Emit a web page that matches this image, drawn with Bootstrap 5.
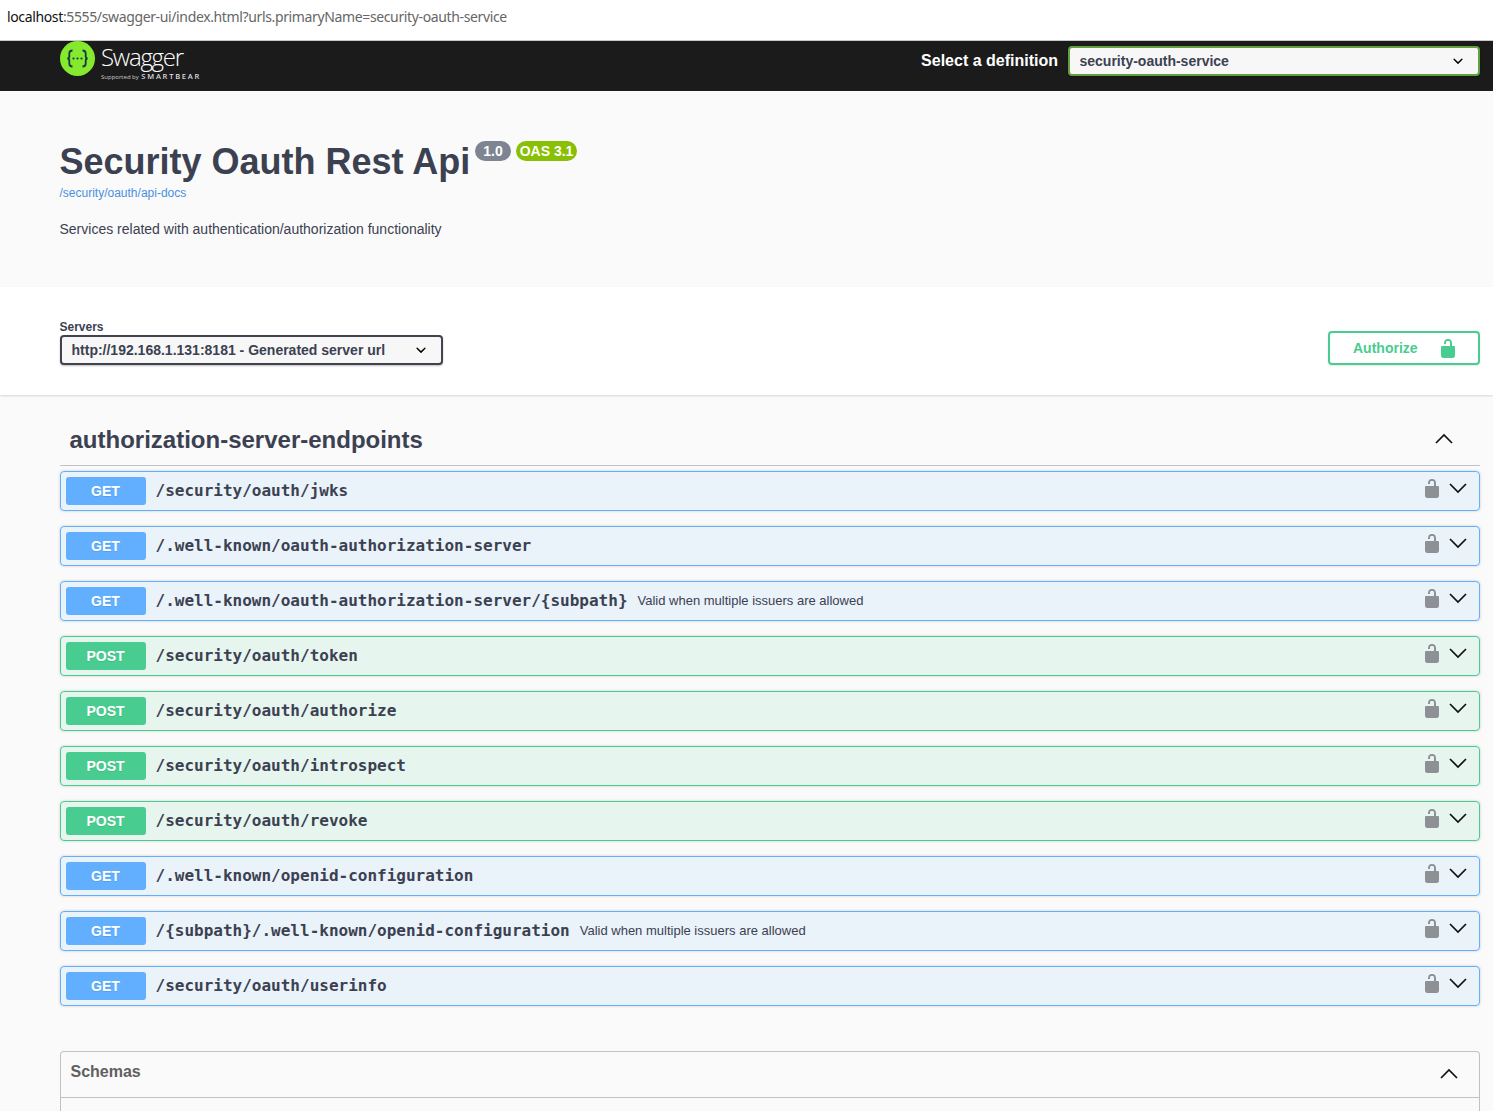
<!DOCTYPE html>
<html lang="en">
<head>
<meta charset="utf-8"/>
<meta content="width=device-width, initial-scale=1.0" name="viewport"/>
<title>Swagger UI</title>
<link href="https://cdn.jsdelivr.net/npm/bootstrap@5.3.2/dist/css/bootstrap.min.css" rel="stylesheet"/>
<style>
  html, body { overflow: hidden; }
  body { background: #fafafa; font-family: "Liberation Sans", Arial, sans-serif; color: #3b4151; }

  .url-bar { height: 41px; background: #fff; border-bottom: 1px solid #c8c8c8; padding: 7px 0 0 7px; font: 14px/20px "Noto Sans", sans-serif; color: #666; letter-spacing: -0.365px; }
  .url-host { color: #111; }

  .top-strip { height: 50px; background: #1b1b1b; padding: 0 13px 0 60px; }
  .logo-text { color: #fff; line-height: 1; margin-left: 6px; }
  .logo-name { font: 300 24px/24px "Open Sans", sans-serif; letter-spacing: -1.25px; margin-top: 4px; }
  .logo-sub { font: 6px/8px "Open Sans", sans-serif; color: #ccc; margin-top: 3px; white-space: nowrap; }
  .logo-sub b { font-size: 7.5px; letter-spacing: 1.75px; font-weight: 600; color: #ddd; margin-left: 1px; }
  .def-area { padding-top: 5px; }
  .def-label { color: #fff; font-size: 16px; font-weight: 700; margin-left: -.5px; }
  .def-select.form-select, .server-select.form-select {
    height: 30px; padding: 0 10px 0 9.5px; border-radius: 4px; background-color: #f7f7f7;
    background-image: url("data:image/svg+xml,%3Csvg xmlns='http://www.w3.org/2000/svg' viewBox='0 0 20 20'%3E%3Cpath d='M13.418 7.859a.695.695 0 0 1 .978 0 .68.68 0 0 1 0 .969l-3.908 3.83a.697.697 0 0 1-.979 0l-3.908-3.83a.68.68 0 0 1 0-.969.695.695 0 0 1 .978 0L10 11l3.418-3.141z'/%3E%3C/svg%3E");
    background-position: right 10px center; background-size: 20px; font-size: 14px; font-weight: 700; color: #3b4151; box-shadow: 0 1px 2px rgba(0,0,0,.25);
  }
  .def-select.form-select { width: 412px; margin-left: 10px; border: 2px solid #62a03f; }
  .server-select.form-select { width: 383px; border: 2px solid #41444e; }

  .info-block { height: 196px; padding: 48px 60px 0 59.5px; background: #fafafa; }
  .api-title { font-size: 36px; line-height: 45px; font-weight: 700; margin: 0; color: #3b4151; }
  .ver-pill { display: inline-block; height: 20px; margin-top: 2px; padding: 0 4px; border-radius: 10px; font-size: 14px; line-height: 20px; font-weight: 700; color: #fff; background: #7d8492; }
  .ver-pill.one { margin-left: 5px; padding: 0 8px; }
  .ver-pill.oas { margin-left: 5px; background: #89bf04; }
  .docs-link { display: block; font-size: 12px; line-height: 16px; margin-top: 1px; color: #4990e2; text-decoration: none; }
  .api-desc { font-size: 14px; line-height: 20px; margin: 18px 0 0; color: #3b4151; }

  .scheme-block { height: 108px; background: #fff; padding: 33px 13px 0 60px; box-shadow: 0 1px 2px rgba(0,0,0,.15); }
  .servers-label { font-size: 12px; line-height: 14px; font-weight: 700; margin-bottom: 1px; margin-left: -.5px; }
  .auth-btn { width: 152px; height: 34px; margin-top: 11px; border: 2px solid #49cc90; border-radius: 4px; background: transparent; color: #49cc90; font-size: 14px; font-weight: 700; padding: 0 20px 0 23px; box-shadow: 0 1px 2px rgba(0,0,0,.1); }

  .ops-wrap { padding: 0 13px 0 60px; }
  .tag-head { height: 71px; border-bottom: 1px solid rgba(59,65,81,.3); padding: 19px 27px 0 9.5px; margin-bottom: 5px; }
  .tag-name { font-size: 24px; font-weight: 700; margin: 0; line-height: 1; padding-top: 1px; }
  .tag-arrow { margin-top: -2px; }

  .op-row { height: 40px; margin-bottom: 15px; padding: 5px 12px 5px 5px; border-radius: 4px; border: 1px solid; box-shadow: 0 0 3px rgba(0,0,0,.19); }
  .op-get { background: rgba(97,175,254,.1); border-color: #61affe; }
  .op-post { background: rgba(73,204,144,.1); border-color: #49cc90; }
  .op-verb { width: 80px; height: 28px; padding-right: 1px; border-radius: 3px; color: #fff; font-size: 14px; font-weight: 700; line-height: 28px; text-align: center; text-shadow: 0 1px 0 rgba(0,0,0,.1); }
  .op-get .op-verb { background: #61affe; }
  .op-post .op-verb { background: #49cc90; }
  .op-path { font: 700 16px/28px "DejaVu Sans Mono", monospace; margin-left: 9.5px; color: #3b4151; }
  .op-note { font-size: 13px; line-height: 28px; margin-left: 10px; color: #3b4151; }
  .op-lock { margin-right: 7px; margin-top: -7px; }
  .op-arrow { margin-top: -6px; }

  .schema-box { margin-top: 45px; height: 60px; border: 1px solid rgba(59,65,81,.3); border-bottom: 0; border-radius: 4px 4px 0 0; }
  .schema-head { height: 46px; border-bottom: 1px solid rgba(59,65,81,.3); padding: 0 21px 0 9.5px; }
  .schema-title { font-size: 16px; font-weight: 700; color: #606060; margin-top: -6px; }
  .schema-arrow { margin-top: -2px; }
</style>
</head>
<body>
<svg class="d-none" xmlns="http://www.w3.org/2000/svg">
  <symbol id="ico-lock" viewBox="0 0 20 20"><path d="M15.8 8H14V5.6C14 2.70 13 1 10 1S6 2.70 6 5.6V6h2v-.8C8 3.20 8.5 3 10 3s2 .2 2 2.2V8H4.2C3.5 8 3 8.5 3 9.2v8.6c0 1.2 1 2.200 2.200 2.200h9.600c1.200 0 2.200-1 2.200-2.200V9.200C17 8.500 16.500 8 15.800 8z"/></symbol>
  <symbol id="ico-down" viewBox="0 0 18 11"><path d="M1 1l8 8 8-8" fill="none" stroke="#111" stroke-width="1.700"/></symbol>
  <symbol id="ico-up" viewBox="0 0 18 11"><path d="M1 10l8-8 8 8" fill="none" stroke="#111" stroke-width="1.700"/></symbol>
</svg>

<div class="url-bar"><span class="url-host">localhost</span>:5555/swagger-ui/index.html?urls.primaryName=security-oauth-service</div>

<div class="top-strip d-flex align-items-start justify-content-between">
  <div class="d-flex">
    <svg width="35" height="35" viewBox="0 0 35 35" xmlns="http://www.w3.org/2000/svg">
      <circle cx="17.500" cy="17.500" r="17.500" fill="#85ea2d"/>
      <path d="M12.500 9.500c-2.500 0-3.200 1-3.200 3v3c0 1.300-.7 2-2 2 1.300 0 2 .7 2 2v3c0 2 .7 3 3.200 3M22.500 9.500c2.500 0 3.200 1 3.200 3v3c0 1.300.7 2 2 2-1.300 0-2 .7-2 2v3c0 2-.7 3-3.200 3" fill="none" stroke="#173647" stroke-width="1.800"/>
      <circle cx="13.500" cy="17.500" r="1.100" fill="#173647"/><circle cx="17.500" cy="17.500" r="1.100" fill="#173647"/><circle cx="21.500" cy="17.500" r="1.100" fill="#173647"/>
    </svg>
    <div class="logo-text">
      <div class="logo-name">Swagger</div>
      <div class="logo-sub">Supported by <b>SMARTBEAR</b></div>
    </div>
  </div>
  <div class="def-area d-flex align-items-center">
    <span class="def-label">Select a definition</span>
    <select class="form-select def-select"><option>security-oauth-service</option></select>
  </div>
</div>

<div class="info-block">
  <div class="d-flex align-items-start">
    <h1 class="api-title">Security Oauth Rest Api</h1>
    <span class="ver-pill one">1.0</span>
    <span class="ver-pill oas">OAS 3.1</span>
  </div>
  <a class="docs-link" href="#">/security/oauth/api-docs</a>
  <p class="api-desc">Services related with authentication/authorization functionality</p>
</div>

<div class="scheme-block d-flex justify-content-between align-items-start">
  <div>
    <div class="servers-label">Servers</div>
    <select class="form-select server-select"><option>http://192.168.1.131:8181 - Generated server url</option></select>
  </div>
  <button class="auth-btn d-flex align-items-center justify-content-between" type="button">
    <span>Authorize</span>
    <svg width="20" height="20" fill="#49cc90"><use href="#ico-lock"/></svg>
  </button>
</div>

<div class="ops-wrap">
  <div class="tag-head d-flex align-items-center justify-content-between">
    <h3 class="tag-name">authorization-server-endpoints</h3>
    <svg class="tag-arrow" width="18" height="11"><use href="#ico-up"/></svg>
  </div>

  <div class="op-row op-get d-flex align-items-center">
    <span class="op-verb">GET</span><span class="op-path">/security/oauth/jwks</span>
    <svg class="op-lock ms-auto" width="20" height="20" fill="#8d9094"><use href="#ico-lock"/></svg><svg class="op-arrow" width="18" height="11"><use href="#ico-down"/></svg>
  </div>
  <div class="op-row op-get d-flex align-items-center">
    <span class="op-verb">GET</span><span class="op-path">/.well-known/oauth-authorization-server</span>
    <svg class="op-lock ms-auto" width="20" height="20" fill="#8d9094"><use href="#ico-lock"/></svg><svg class="op-arrow" width="18" height="11"><use href="#ico-down"/></svg>
  </div>
  <div class="op-row op-get d-flex align-items-center">
    <span class="op-verb">GET</span><span class="op-path">/.well-known/oauth-authorization-server/{subpath}</span><span class="op-note">Valid when multiple issuers are allowed</span>
    <svg class="op-lock ms-auto" width="20" height="20" fill="#8d9094"><use href="#ico-lock"/></svg><svg class="op-arrow" width="18" height="11"><use href="#ico-down"/></svg>
  </div>
  <div class="op-row op-post d-flex align-items-center">
    <span class="op-verb">POST</span><span class="op-path">/security/oauth/token</span>
    <svg class="op-lock ms-auto" width="20" height="20" fill="#8d9094"><use href="#ico-lock"/></svg><svg class="op-arrow" width="18" height="11"><use href="#ico-down"/></svg>
  </div>
  <div class="op-row op-post d-flex align-items-center">
    <span class="op-verb">POST</span><span class="op-path">/security/oauth/authorize</span>
    <svg class="op-lock ms-auto" width="20" height="20" fill="#8d9094"><use href="#ico-lock"/></svg><svg class="op-arrow" width="18" height="11"><use href="#ico-down"/></svg>
  </div>
  <div class="op-row op-post d-flex align-items-center">
    <span class="op-verb">POST</span><span class="op-path">/security/oauth/introspect</span>
    <svg class="op-lock ms-auto" width="20" height="20" fill="#8d9094"><use href="#ico-lock"/></svg><svg class="op-arrow" width="18" height="11"><use href="#ico-down"/></svg>
  </div>
  <div class="op-row op-post d-flex align-items-center">
    <span class="op-verb">POST</span><span class="op-path">/security/oauth/revoke</span>
    <svg class="op-lock ms-auto" width="20" height="20" fill="#8d9094"><use href="#ico-lock"/></svg><svg class="op-arrow" width="18" height="11"><use href="#ico-down"/></svg>
  </div>
  <div class="op-row op-get d-flex align-items-center">
    <span class="op-verb">GET</span><span class="op-path">/.well-known/openid-configuration</span>
    <svg class="op-lock ms-auto" width="20" height="20" fill="#8d9094"><use href="#ico-lock"/></svg><svg class="op-arrow" width="18" height="11"><use href="#ico-down"/></svg>
  </div>
  <div class="op-row op-get d-flex align-items-center">
    <span class="op-verb">GET</span><span class="op-path">/{subpath}/.well-known/openid-configuration</span><span class="op-note">Valid when multiple issuers are allowed</span>
    <svg class="op-lock ms-auto" width="20" height="20" fill="#8d9094"><use href="#ico-lock"/></svg><svg class="op-arrow" width="18" height="11"><use href="#ico-down"/></svg>
  </div>
  <div class="op-row op-get d-flex align-items-center">
    <span class="op-verb">GET</span><span class="op-path">/security/oauth/userinfo</span>
    <svg class="op-lock ms-auto" width="20" height="20" fill="#8d9094"><use href="#ico-lock"/></svg><svg class="op-arrow" width="18" height="11"><use href="#ico-down"/></svg>
  </div>

  <div class="schema-box">
    <div class="schema-head d-flex align-items-center justify-content-between">
      <span class="schema-title">Schemas</span>
      <svg class="schema-arrow" width="18" height="11"><use href="#ico-up"/></svg>
    </div>
  </div>
</div>

<script src="https://cdn.jsdelivr.net/npm/bootstrap@5.3.2/dist/js/bootstrap.bundle.min.js"></script>
</body>
</html>
